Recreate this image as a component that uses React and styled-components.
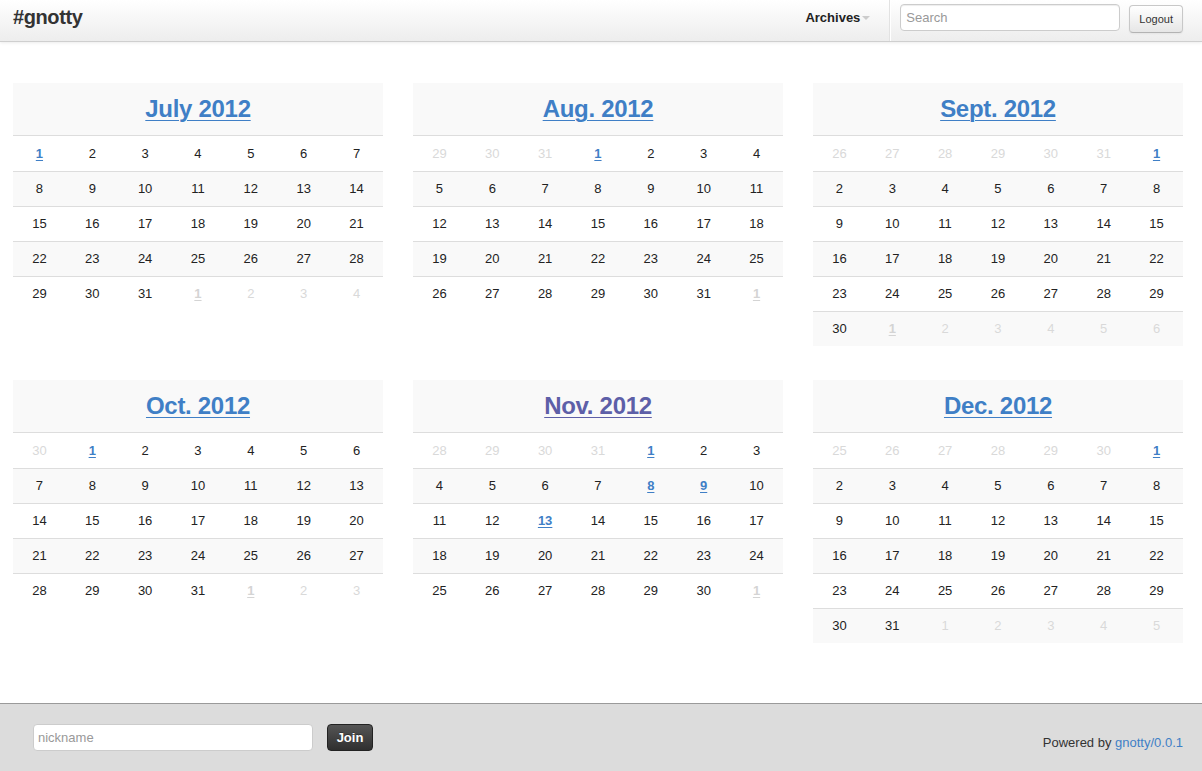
import React from 'react';
import styled, { createGlobalStyle } from 'styled-components';

const GlobalStyle = createGlobalStyle`
  html, body {
    margin: 0;
    padding: 0;
    background: #fff;
    font-family: "Liberation Sans", Arial, sans-serif;
    font-size: 13px;
    color: #333;
  }
  * { box-sizing: border-box; }
`;

const MONTHS = [
  { year: 2012, month: 6, label: 'July 2012' },
  { year: 2012, month: 7, label: 'Aug. 2012' },
  { year: 2012, month: 8, label: 'Sept. 2012' },
  { year: 2012, month: 9, label: 'Oct. 2012', },
  { year: 2012, month: 10, label: 'Nov. 2012', visited: true },
  { year: 2012, month: 11, label: 'Dec. 2012' },
];

// days that have an archive page
const LINKED = new Set([
  '2012-6-1', '2012-7-1', '2012-8-1', '2012-9-1', '2012-10-1',
  '2012-10-8', '2012-10-9', '2012-10-13', '2012-11-1',
]);

const buildWeeks = (year, month) => {
  const first = new Date(year, month, 1);
  const start = new Date(year, month, 1 - first.getDay());
  const last = new Date(year, month + 1, 0);
  const weeks = [];
  let cur = new Date(start);
  while (cur <= last) {
    const week = [];
    for (let i = 0; i < 7; i++) {
      week.push({
        day: cur.getDate(),
        inMonth: cur.getMonth() === month,
        linked: LINKED.has(`${cur.getFullYear()}-${cur.getMonth()}-${cur.getDate()}`),
      });
      cur = new Date(cur.getFullYear(), cur.getMonth(), cur.getDate() + 1);
    }
    weeks.push(week);
  }
  return weeks;
};

const App = () => {
  return (
    <Page>
      <GlobalStyle />
      <Navbar>
        <Brand>#gnotty</Brand>
        <NavRight>
          <NavItem>
            Archives <Caret />
          </NavItem>
          <Divider />
          <SearchInput placeholder="Search" />
          <LogoutBtn>Logout</LogoutBtn>
        </NavRight>
      </Navbar>

      <Main>
        <CalendarGrid>
          {MONTHS.map((m) => (
            <Calendar key={m.label}>
              <tbody>
                <TitleRow>
                  <TitleCell colSpan={7}>
                    <TitleLink href="#" $visited={m.visited}>{m.label}</TitleLink>
                  </TitleCell>
                </TitleRow>
                {buildWeeks(m.year, m.month).map((week, wi) => (
                  <WeekRow key={wi} $striped={wi % 2 === 1}>
                    {week.map((d, di) => (
                      <DayCell key={di} $muted={!d.inMonth} $first={wi === 0}>
                        {d.linked ? <DayLink href="#" $muted={!d.inMonth}>{d.day}</DayLink> : d.day}
                      </DayCell>
                    ))}
                  </WeekRow>
                ))}
              </tbody>
            </Calendar>
          ))}
        </CalendarGrid>
      </Main>

      <Footer>
        <JoinForm>
          <NickInput placeholder="nickname" />
          <JoinBtn>Join</JoinBtn>
        </JoinForm>
        <Powered>
          Powered by <a href="#">gnotty/0.0.1</a>
        </Powered>
      </Footer>
    </Page>
  );
};

const Page = styled.div`
  min-height: 100vh;
  display: flex;
  flex-direction: column;
`;

const Navbar = styled.div`
  height: 42px;
  display: flex;
  align-items: center;
  justify-content: space-between;
  padding: 0 19px 0 13px;
  background: linear-gradient(to bottom, #ffffff, #ededed);
  border-bottom: 1px solid #cfcfcf;
  box-shadow: 0 1px 3px rgba(0, 0, 0, 0.08);
`;

const Brand = styled.a`
  font-size: 20px;
  font-weight: bold;
  color: #333;
  letter-spacing: -0.4px;
  margin-top: -7px;
`;

const NavRight = styled.div`
  display: flex;
  align-items: center;
  height: 100%;
`;

const NavItem = styled.a`
  font-weight: bold;
  font-size: 13px;
  color: #222;
  display: flex;
  align-items: center;
  margin-top: -7px;
  padding-right: 19px;
`;

const Caret = styled.span`
  display: inline-block;
  width: 0;
  height: 0;
  margin-left: 2px;
  margin-top: 2px;
  border-left: 4px solid transparent;
  border-right: 4px solid transparent;
  border-top: 4px solid #ccc;
`;

const Divider = styled.div`
  width: 2px;
  height: 100%;
  border-left: 1px solid #e2e2e2;
  border-right: 1px solid #fff;
  margin-right: 9px;
`;

const SearchInput = styled.input`
  width: 220px;
  height: 27px;
  margin-top: -6px;
  padding: 3px 5px;
  font-family: inherit;
  font-size: 13px;
  border: 1px solid #ccc;
  border-radius: 4px;
  box-shadow: inset 0 1px 1px rgba(0, 0, 0, 0.075);
  &::placeholder { color: #999; }
`;

const LogoutBtn = styled.button`
  margin-left: 9px;
  margin-top: -4px;
  height: 28px;
  padding: 0 9px;
  font-family: inherit;
  font-size: 11px;
  color: #333;
  background: linear-gradient(to bottom, #ffffff, #e6e6e6);
  border: 1px solid #c8c8c8;
  border-bottom-color: #b3b3b3;
  border-radius: 4px;
  box-shadow: inset 0 1px 0 rgba(255, 255, 255, 0.2), 0 1px 2px rgba(0, 0, 0, 0.05);
`;

const Main = styled.div`
  flex: 1;
  padding: 41px 19px 40px 13px;
`;

const CalendarGrid = styled.div`
  display: grid;
  grid-template-columns: repeat(3, 370px);
  column-gap: 30px;
  row-gap: 34px;
  align-items: start;
`;

const Calendar = styled.table`
  width: 370px;
  border-collapse: collapse;
  table-layout: fixed;
`;

const TitleRow = styled.tr`
  background: #f9f9f9;
`;

const TitleCell = styled.td`
  height: 52px;
  text-align: center;
  padding: 0;
`;

const TitleLink = styled.a`
  font-size: 24px;
  font-weight: bold;
  letter-spacing: -0.3px;
  color: ${(p) => (p.$visited ? '#5d5fa8' : '#3f7fc6')};
  text-decoration: underline;
  text-decoration-thickness: 1px;
  text-underline-offset: 3px;
`;

const WeekRow = styled.tr`
  background: ${(p) => (p.$striped ? '#f9f9f9' : '#fff')};
  border-top: 1px solid #dddddd;
`;

const DayCell = styled.td`
  height: ${(p) => (p.$first ? '36px' : '35px')};
  padding: 0;
  text-align: center;
  font-size: 13px;
  color: ${(p) => (p.$muted ? '#d9d9d9' : '#222')};
`;

const DayLink = styled.a`
  font-weight: bold;
  color: ${(p) => (p.$muted ? '#d4d4d4' : '#3f7fc6')};
  text-decoration: underline;
  text-underline-offset: 2px;
`;

const Footer = styled.div`
  height: 68px;
  background: #dcdcdc;
  border-top: 1px solid #9a9a9a;
  display: flex;
  align-items: center;
  justify-content: space-between;
  padding: 0 19px 0 33px;
`;

const JoinForm = styled.div`
  display: flex;
  align-items: center;
  gap: 14px;
`;

const NickInput = styled.input`
  width: 280px;
  height: 27px;
  padding: 3px 4px;
  font-family: inherit;
  font-size: 13px;
  border: 1px solid #ccc;
  border-radius: 4px;
  background: #fff;
  &::placeholder { color: #999; }
`;

const JoinBtn = styled.button`
  height: 27px;
  width: 46px;
  font-family: inherit;
  font-size: 13px;
  font-weight: bold;
  color: #fff;
  text-shadow: 0 -1px 0 rgba(0, 0, 0, 0.3);
  background: linear-gradient(to bottom, #555, #2f2f2f);
  border: 1px solid #222;
  border-radius: 4px;
`;

const Powered = styled.div`
  font-size: 13px;
  color: #333;
  margin-top: 10px;
  a {
    color: #3f7fc6;
    text-decoration: none;
  }
`;

export default App;
